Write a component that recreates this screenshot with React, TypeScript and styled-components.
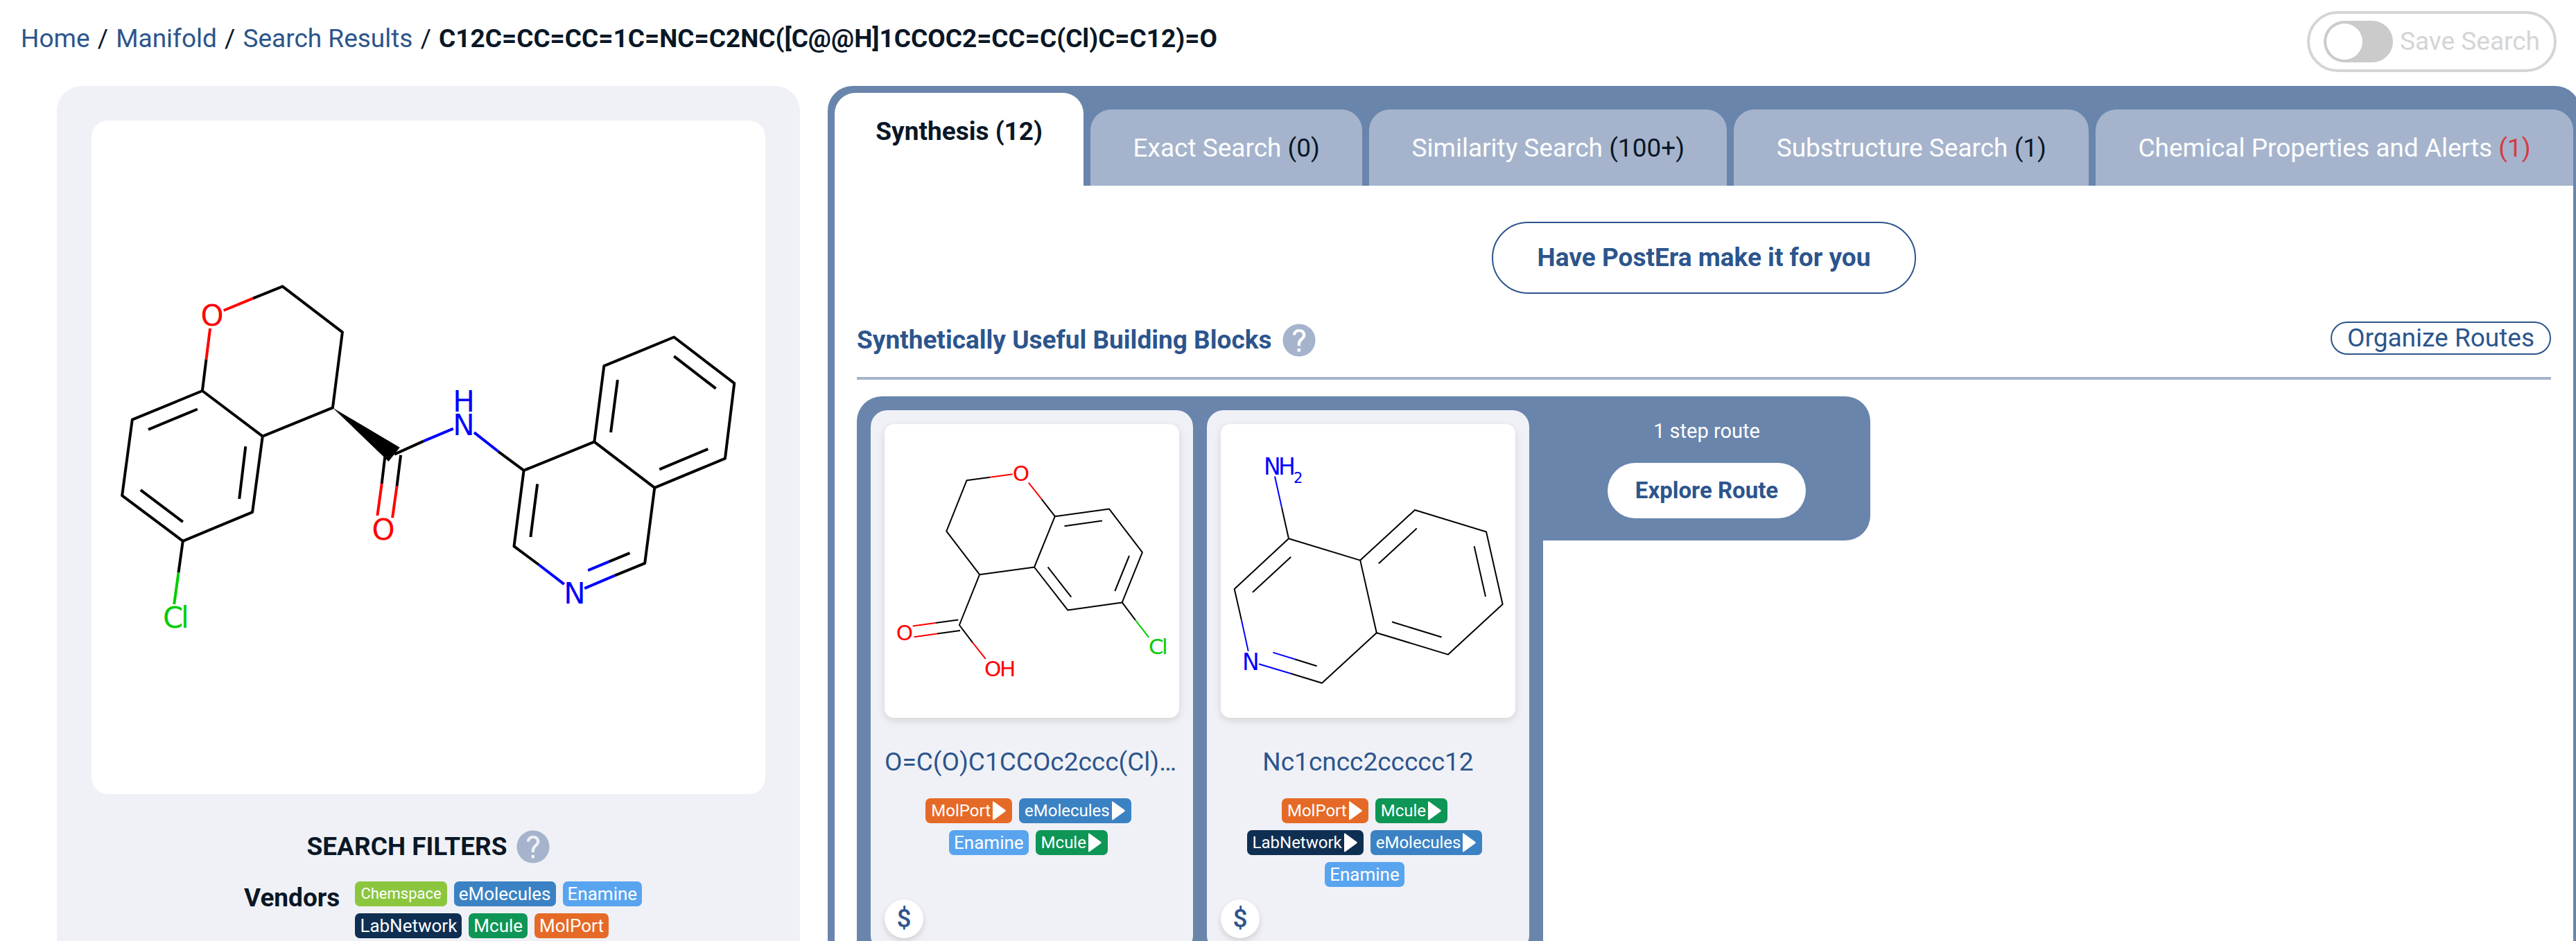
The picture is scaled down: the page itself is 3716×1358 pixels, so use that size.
import React from "react";
import styled, { createGlobalStyle } from "styled-components";

const color = {
  ink: "#0a1726",
  link: "#2c558c",
  steel: "#6985ac",
  mist: "#a5b4cc",
  panel: "#f0f1f6",
  disabled: "#d5d5d5",
  alert: "#d73a41",
};

const vendors = {
  Chemspace: "#8cc63f",
  eMolecules: "#3b82c4",
  Enamine: "#59a4ef",
  LabNetwork: "#0f2f52",
  Mcule: "#0d9655",
  MolPort: "#e66a27",
};
type Vendor = keyof typeof vendors;

const GlobalStyle = createGlobalStyle`
  *, *::before, *::after { box-sizing: border-box; }
  body {
    margin: 0;
    background: #fff;
    color: ${color.ink};
    font-family: Roboto, "Liberation Sans", sans-serif;
    font-size: 37px;
    line-height: 48px;
  }
  button { font: inherit; cursor: pointer; }
  a { color: ${color.link}; text-decoration: none; }
`;

const Page = styled.div`
  height: 100vh;
  overflow: hidden;
`;

const TopBar = styled.header`
  display: flex;
  justify-content: space-between;
  align-items: flex-start;
  height: 124px;
  padding: 16px 28px 0 30px;
`;

const Breadcrumb = styled.nav`
  padding-top: 16px;
  white-space: pre;
`;

const Separator = styled.span`
  margin: 0 2px;
`;

const SaveToggle = styled.label`
  display: flex;
  align-items: center;
  gap: 10px;
  height: 88px;
  padding: 0 20px;
  border: 4px solid ${color.disabled};
  border-radius: 44px;
  color: ${color.disabled};
`;

const Switch = styled.input`
  appearance: none;
  display: flex;
  align-items: center;
  width: 100px;
  height: 60px;
  margin: 0;
  padding: 4px;
  border-radius: 30px;
  background: #cbcbcb;

  &::before {
    content: "";
    width: 52px;
    height: 52px;
    border-radius: 50%;
    background: #fff;
  }
  &:checked {
    justify-content: flex-end;
  }
`;

const Columns = styled.main`
  display: grid;
  grid-template-columns: minmax(0, 67fr) minmax(0, 158fr);
  gap: 40px;
  align-items: start;
  margin: 0 -6px 0 82px;
`;

const SidePanel = styled.aside`
  padding: 50px;
  min-height: 1400px;
  border-radius: 36px;
  background: ${color.panel};
`;

const QueryImage = styled.div`
  aspect-ratio: 1;
  border-radius: 24px;
  background: #fff;
`;

const Drawing = styled.svg`
  display: block;
  width: 100%;
  height: 100%;
  fill: none;
`;

const FiltersTitle = styled.h2`
  display: flex;
  justify-content: center;
  align-items: center;
  gap: 14px;
  margin: 52px 0 26px;
  font-size: 37px;
  font-weight: 700;
`;

const HelpButton = styled.button`
  display: flex;
  padding: 0;
  border: 0;
  background: none;
`;

const FilterRow = styled.div`
  display: flex;
  gap: 22px;
  padding-left: 220px;
`;

const FilterName = styled.div`
  font-weight: 700;
`;

const VendorFilters = styled.div`
  display: flex;
  flex-wrap: wrap;
  gap: 10px;
  width: 440px;
`;

const TagButton = styled.button<{ $vendor: Vendor; $arrow?: boolean }>`
  display: flex;
  align-items: center;
  gap: 3px;
  height: 36px;
  padding: ${(p) => (p.$arrow || p.$vendor === "Chemspace" ? "0 8px" : "0 7px")};
  border: 0;
  border-radius: 7px;
  background: ${(p) => vendors[p.$vendor]};
  color: #fff;
  font-size: ${(p) => (p.$vendor === "Chemspace" ? 22 : p.$arrow ? 24 : 26)}px;
  line-height: 36px;
`;

const Results = styled.section`
  border: 10px solid ${color.steel};
  border-radius: 36px;
  background: ${color.steel};
`;

const TabList = styled.div`
  display: flex;
  align-items: flex-end;
  gap: 10px;
`;

const Tab = styled.button<{ $active?: boolean }>`
  flex: 1 1 auto;
  height: ${(p) => (p.$active ? 134 : 110)}px;
  padding: ${(p) => (p.$active ? "0 38px 22px" : "2px 40px 0")};
  border: 0;
  border-radius: 30px 30px 0 0;
  background: ${(p) => (p.$active ? "#fff" : color.mist)};
  color: ${(p) => (p.$active ? color.ink : "#fff")};
  font-weight: ${(p) => (p.$active ? 700 : 400)};
  white-space: nowrap;
`;

const Count = styled.span<{ $alert?: boolean }>`
  color: ${(p) => (p.$alert ? color.alert : color.ink)};
`;

const TabPanel = styled.div`
  display: flex;
  flex-direction: column;
  min-height: 1300px;
  padding: 52px 32px;
  background: #fff;
`;

const OutlineButton = styled.button<{ $compact?: boolean }>`
  height: ${(p) => (p.$compact ? 48 : 104)}px;
  padding: ${(p) => (p.$compact ? "0 22px" : "0 64px")};
  border: 2px solid ${color.link};
  border-radius: 52px;
  background: #fff;
  color: ${color.link};
  font-weight: ${(p) => (p.$compact ? 400 : 700)};
  line-height: 40px;
`;

const MakeRow = styled.div`
  display: flex;
  justify-content: center;
`;

const SectionHead = styled.div`
  display: flex;
  justify-content: space-between;
  align-items: flex-start;
  height: 84px;
  margin: 40px 0 24px;
  border-bottom: 4px solid ${color.mist};
`;

const SectionTitle = styled.h2`
  display: flex;
  align-items: center;
  gap: 16px;
  margin: 0;
  padding-top: 3px;
  color: ${color.link};
  font-size: 37px;
  font-weight: 700;
`;

const RouteBlock = styled.article`
  display: flex;
  align-items: flex-start;
`;

const RouteCards = styled.div`
  display: grid;
  grid-template-columns: repeat(2, 465px);
  gap: 20px;
  padding: 20px;
  border-radius: 36px 0 36px 36px;
  background: ${color.steel};
`;

const RouteInfo = styled.div`
  display: flex;
  flex-direction: column;
  align-items: center;
  gap: 22px;
  width: 472px;
  height: 208px;
  padding-top: 26px;
  border-radius: 0 36px 36px 0;
  background: ${color.steel};
  color: #fff;
  font-size: 29px;
`;

const ExploreButton = styled.button`
  height: 80px;
  padding: 0 40px;
  border: 0;
  border-radius: 40px;
  background: #fff;
  color: ${color.link};
  font-size: 33px;
  font-weight: 700;
`;

const Card = styled.div`
  display: flex;
  flex-direction: column;
  height: 782px;
  padding: 20px;
  border-radius: 24px;
  background: ${color.panel};
`;

const CardImage = styled.div`
  height: 424px;
  border-radius: 14px;
  background: #fff;
  box-shadow: 0 4px 12px rgba(0, 0, 0, 0.12);
`;

const CardTitle = styled.a`
  overflow: hidden;
  margin: 40px 0 28px;
  text-align: center;
  text-overflow: ellipsis;
  white-space: nowrap;
`;

const CardVendors = styled.div`
  display: flex;
  flex-wrap: wrap;
  justify-content: center;
  gap: 10px;
  padding: 0 20px 0 10px;
`;

const PriceButton = styled.button`
  display: flex;
  justify-content: center;
  align-items: center;
  width: 56px;
  height: 56px;
  margin-top: auto;
  padding: 0;
  border: 0;
  border-radius: 50%;
  background: #fff;
  box-shadow: 0 4px 8px rgba(0, 0, 0, 0.14);
  color: ${color.link};
  font-weight: 500;
`;

function Help({ mark }: { mark: string }) {
  return (
    <HelpButton aria-label="Help">
      <svg width="48" height="48" viewBox="0 0 24 24">
        <circle cx="12" cy="12" r="11.8" fill={color.mist} />
        <path
          fill={mark}
          d="M10.8 18h2.2v2.2h-2.2zM12 4a4.4 4.4 0 0 0-4.6 4.3h2.1A2.4 2.4 0 0 1 12 6c1.500 0 2.500 1 2.500 2.300 0 2.200-3.600 2.400-3.600 6.500v1.200H13v-1c0-3 3.700-3.600 3.700-6.700C16.700 5.700 14.600 4 12 4z"
        />
      </svg>
    </HelpButton>
  );
}

function Tag({ vendor, arrow }: { vendor: Vendor; arrow?: boolean }) {
  return (
    <TagButton $vendor={vendor} $arrow={arrow}>
      {vendor}
      {arrow && (
        <svg width="20" height="28" viewBox="0 0 20 28">
          <path fill="#fff" d="M0 2Q0-.5 2.500 1.500L18 12.800Q19.500 14 18 15.200L2.500 26.500Q0 28.500 0 26z" />
        </svg>
      )}
    </TagButton>
  );
}

const O = "#ff0000";
const N = "#0000ff";
const Cl = "#00cc00";

type Bond = [string, string];
function Molecule({
  size,
  stroke,
  bonds,
  label,
  children,
}: {
  size: number;
  stroke: number;
  bonds: Bond[];
  label: string;
  children: React.ReactNode;
}) {
  return (
    <Drawing viewBox={`0 0 ${size} ${size}`} preserveAspectRatio="xMinYMin meet" role="img" aria-label={label}>
      {bonds.map(([c, d], i) => (
        <path key={i} d={d} stroke={c} strokeWidth={stroke} strokeLinejoin="round" />
      ))}
      {children}
    </Drawing>
  );
}

const Atom = styled.text<{ $size: number }>`
  font-family: "DejaVu Sans", sans-serif;
  font-size: ${(p) => p.$size}px;
`;

const K = "#000";
const queryBonds: Bond[] = [
  [K, "M232.800 256.600L275.600 239.300L361.900 305.400L347.900 414.400L246.800 455.600L159.900 390L58.800 431.700L44.100 541.200L131.800 606.800L232.100 565.100L246.800 455.600"],
  [K, "M159.900 390L165.500 344.400"],
  [O, "M165.500 344.400L171.100 300M190.700 274L232.800 256.600"],
  [K, "M82 445.800L152.800 416.500M70.800 533.100L131.800 579.200M222.300 470.200L213.200 546.100"],
  [K, "M131.800 606.800L125.500 652.300"],
  [Cl, "M125.500 652.300L119.200 697.900"],
  [K, "M437 481.600L479 462.600"],
  [N, "M479 462.600L521.800 444.700M552 450.100L587.100 477.800"],
  [K, "M423.600 482.700L418.700 523.900M446.100 482.700L440.500 527.700"],
  [O, "M418.700 523.900L412.400 570M440.500 527.700L434.100 573.200"],
  [K, "M587.100 477.800L623.600 504.900L725.300 463.700L812.300 529.800L798.200 638.800L754.700 656.700"],
  [K, "M623.600 504.900L609.500 614.400L645.300 641"],
  [K, "M725.300 463.700L739.300 354.200L840.300 312.500L927.300 379.100L914 487.600L812.300 529.800"],
  [K, "M758.900 374.300L749.100 450.100M840.300 340.100L900.600 386.700M889.400 474L819.300 503.300M643.200 524.400L633.400 600.900M746.300 636.600L776.500 624.200"],
  [N, "M716.200 649.100L746.300 636.600M645.300 641L681.800 669.100M711.200 675.100L754.700 656.700"],
];

const acidBonds: Bond[] = [
  [K, "M152.300 76.800L118.500 81.300L89.300 154.600L137.100 217.200L216 206.500L245.800 133.200L324.100 122.600L371.900 185.200L342.700 257.400L264.400 268.600L216 206.500"],
  [K, "M137.100 217.200L107.900 290L127.100 315.400M226.600 108.300L245.800 133.200"],
  [O, "M152.300 76.800L184.800 72.300M207.800 84.600L226.600 108.300M127.100 315.400L145.800 338.800"],
  [K, "M259.500 147.300L314 139.600M353 190L332.300 241M235.600 206.300L269.300 249.700"],
  [K, "M106.300 282.600L73.300 287M109 298L76 302.500M342.700 257.400L361.900 282.800"],
  [O, "M73.300 287L40.700 291.600M76 302.500L42.600 307.200"],
  [Cl, "M361.900 282.800L381.200 307.800"],
];

const amineBonds: Bond[] = [
  [N, "M78 75.500L88 120.500M29.800 282.400L39.700 327.600M55 346.200L101 360M75.300 329.600L106.700 339.300"],
  [K, "M88 120.500L98 165.300L19.700 238L29.800 282.400M101 360L146 373.800L224.800 301.300L201.200 196.600L98 165.300"],
  [K, "M201.200 196.600L280 124L383 155.500L406.600 260L328 332.600L224.800 301.300"],
  [K, "M106.700 339.300L138.600 349.200M101.200 191.800L46 242.800M282.700 150.600L227.800 201.300M365.600 176.200L382 249M247 285.500L318.600 307.500"],
];

export default function App() {
  return (
    <Page>
      <GlobalStyle />
      <TopBar>
        <Breadcrumb aria-label="Breadcrumb">
          <a href="#home">Home</a>
          <Separator> / </Separator>
          <a href="#manifold">Manifold</a>
          <Separator> / </Separator>
          <a href="#results">Search Results</a>
          <Separator> / </Separator>
          <strong>C12C=CC=CC=1C=NC=C2NC([C@@H]1CCOC2=CC=C(Cl)C=C12)=O</strong>
        </Breadcrumb>
        <SaveToggle>
          <Switch type="checkbox" role="switch" disabled />
          Save Search
        </SaveToggle>
      </TopBar>
      <Columns>
        <SidePanel>
          <QueryImage>
            <Molecule size={972} stroke={4} bonds={queryBonds} label="Query molecule">
              <path fill={K} d="M347.900 414.400L444.700 471.800L428.500 491.900z" />
              <g textAnchor="middle">
                <Atom $size={42} x="174" y="296" fill={O}>O</Atom>
                <Atom $size={42} x="421" y="605" fill={O}>O</Atom>
                <Atom $size={42} x="537" y="454" fill={N}>N</Atom>
                <Atom $size={42} x="537" y="420" fill={N}>H</Atom>
                <Atom $size={42} x="697" y="697" fill={N}>N</Atom>
              </g>
              <Atom $size={42} x="103" y="732" fill={Cl}>C</Atom>
              <Atom $size={42} x="129" y="732" fill={Cl}>l</Atom>
            </Molecule>
          </QueryImage>
          <FiltersTitle>
            SEARCH FILTERS <Help mark={color.panel} />
          </FiltersTitle>
          <FilterRow>
            <FilterName>Vendors</FilterName>
            <VendorFilters>
              <Tag vendor="Chemspace" />
              <Tag vendor="eMolecules" />
              <Tag vendor="Enamine" />
              <Tag vendor="LabNetwork" />
              <Tag vendor="Mcule" />
              <Tag vendor="MolPort" />
            </VendorFilters>
          </FilterRow>
        </SidePanel>
        <Results>
          <TabList role="tablist">
            <Tab role="tab" aria-selected $active>Synthesis (12)</Tab>
            <Tab role="tab">Exact Search <Count>(0)</Count></Tab>
            <Tab role="tab">Similarity Search <Count>(100+)</Count></Tab>
            <Tab role="tab">Substructure Search <Count>(1)</Count></Tab>
            <Tab role="tab">Chemical Properties and Alerts <Count $alert>(1)</Count></Tab>
          </TabList>
          <TabPanel role="tabpanel">
            <MakeRow>
              <OutlineButton>Have PostEra make it for you</OutlineButton>
            </MakeRow>
            <SectionHead>
              <SectionTitle>
                Synthetically Useful Building Blocks <Help mark="#fff" />
              </SectionTitle>
              <OutlineButton $compact>Organize Routes</OutlineButton>
            </SectionHead>
            <RouteBlock>
              <RouteCards>
                <Card>
                  <CardImage>
                    <Molecule size={424} stroke={2} bonds={acidBonds} label="O=C(O)C1CCOc2ccc(Cl)cc21">
                      <g textAnchor="middle">
                        <Atom $size={31} x="197" y="82" fill={O}>O</Atom>
                        <Atom $size={31} x="29" y="312" fill={O}>O</Atom>
                      </g>
                      <Atom $size={31} x="144" y="364" fill={O}>O</Atom>
                      <Atom $size={31} x="166" y="364" fill={O}>H</Atom>
                      <Atom $size={31} x="381" y="332" fill={Cl}>C</Atom>
                      <Atom $size={31} x="400" y="332" fill={Cl}>l</Atom>
                    </Molecule>
                  </CardImage>
                  <CardTitle href="#acid">O=C(O)C1CCOc2ccc(Cl)cc21</CardTitle>
                  <CardVendors>
                    <Tag vendor="MolPort" arrow />
                    <Tag vendor="eMolecules" arrow />
                    <Tag vendor="Enamine" />
                    <Tag vendor="Mcule" arrow />
                  </CardVendors>
                  <PriceButton aria-label="Prices">$</PriceButton>
                </Card>
                <Card>
                  <CardImage>
                    <Molecule size={424} stroke={2} bonds={amineBonds} label="Nc1cncc2ccccc12">
                      <Atom $size={33} x="62" y="73" fill={N}>N</Atom>
                      <Atom $size={33} x="83" y="73" fill={N}>H</Atom>
                      <Atom $size={21} x="105" y="85" fill={N}>2</Atom>
                      <Atom $size={33} x="31" y="355" fill={N}>N</Atom>
                    </Molecule>
                  </CardImage>
                  <CardTitle href="#amine">Nc1cncc2ccccc12</CardTitle>
                  <CardVendors>
                    <Tag vendor="MolPort" arrow />
                    <Tag vendor="Mcule" arrow />
                    <Tag vendor="LabNetwork" arrow />
                    <Tag vendor="eMolecules" arrow />
                    <Tag vendor="Enamine" />
                  </CardVendors>
                  <PriceButton aria-label="Prices">$</PriceButton>
                </Card>
              </RouteCards>
              <RouteInfo>
                1 step route
                <ExploreButton>Explore Route</ExploreButton>
              </RouteInfo>
            </RouteBlock>
          </TabPanel>
        </Results>
      </Columns>
    </Page>
  );
}
